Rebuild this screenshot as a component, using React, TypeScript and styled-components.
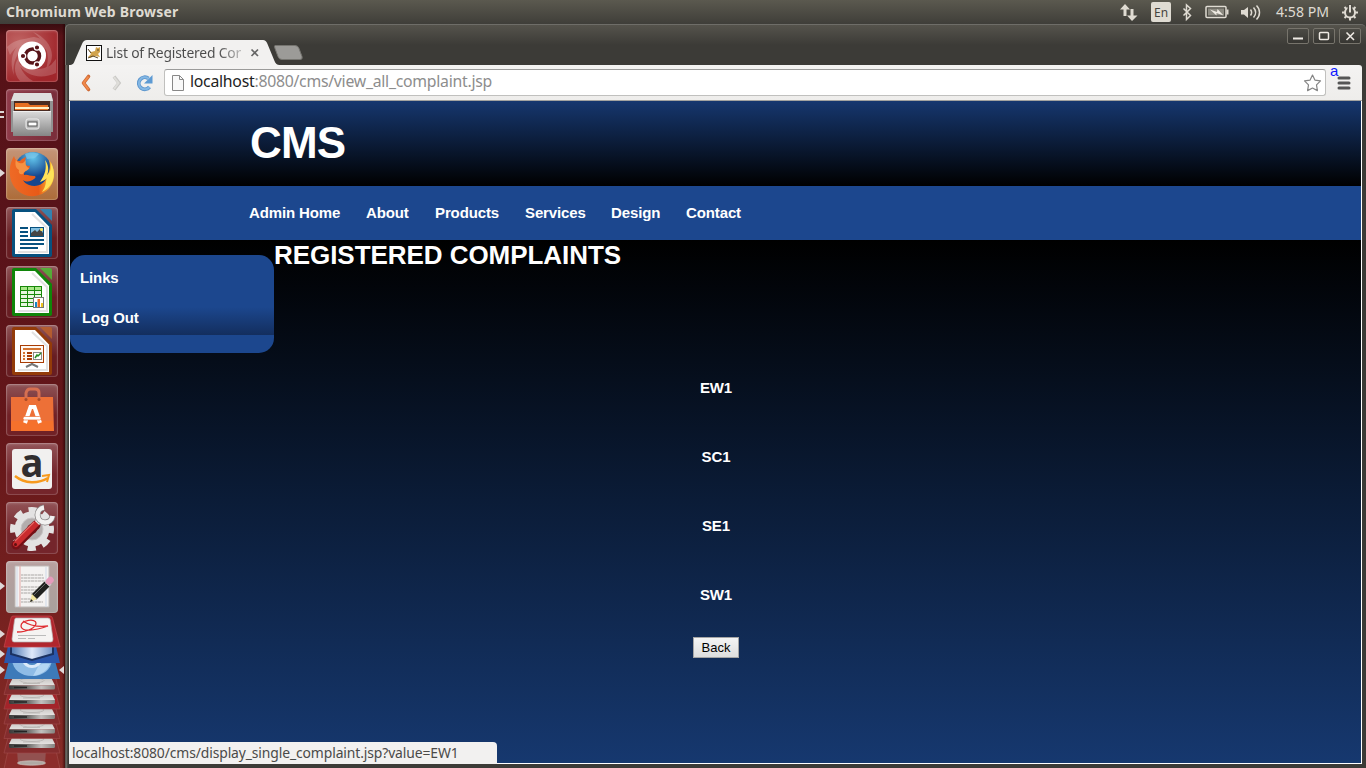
import React from "react";
import styled, { createGlobalStyle } from "styled-components";

const ui = `"Noto Sans", "Open Sans", sans-serif`;
const web = `"Liberation Sans", Arial, sans-serif`;

const Global = createGlobalStyle`
  * { box-sizing: border-box; }
  body { margin: 0; overflow: hidden; background: #3c3b37; }
  svg { display: block; flex: none; overflow: visible; }
`;

const Desktop = styled.div`
  width: 1366px;
  height: 768px;
  display: flex;
  flex-direction: column;
  overflow: hidden;
`;

const TopPanel = styled.header`
  height: 24px;
  flex: none;
  display: flex;
  align-items: center;
  justify-content: space-between;
  padding-left: 6px;
  background: linear-gradient(#5b594f, #3f3e39);
  color: #dfdbd2;
  font-family: ${ui};
`;

const PanelTitle = styled.span`
  font-size: 14px;
  font-weight: 700;
  line-height: 24px;
  white-space: nowrap;
  letter-spacing: 0.2px;
`;

const Workspace = styled.div`
  flex: 1;
  display: flex;
  min-height: 0;
`;

const Launcher = styled.nav`
  width: 65px;
  flex: none;
  display: flex;
  flex-direction: column;
  background: linear-gradient(90deg, rgba(0, 0, 0, 0) 62px, rgba(30, 0, 0, 0.6) 65px),
    linear-gradient(#3a0c10 0, #571217 12px, #58131a 200px, #641619 400px, #7c2522 650px, #852c27);
`;

const LauncherSlot = styled.div`
  height: 59px;
  flex: none;
  display: flex;
  padding-top: 6px;
  position: relative;
`;

const Tile = styled.div<{ $bg: string }>`
  width: 52px;
  height: 52px;
  margin-left: 6px;
  border-radius: 4px;
  background: ${(p) => p.$bg};
  box-shadow: inset 0 0 0 1px rgba(255, 255, 255, 0.14), inset 0 1px 3px rgba(255, 255, 255, 0.25);
`;

const Marker = styled.span<{ $top: number; $right?: boolean }>`
  position: absolute;
  top: ${(p) => p.$top}px;
  ${(p) => (p.$right ? "right: 1px;" : "left: 0;")}
  border: 4px solid transparent;
  ${(p) =>
    p.$right
      ? "border-right: 5px solid #ded8d8; border-left: 0;"
      : "border-left: 5px solid #ded8d8; border-right: 0;"}
`;

const DoubleMarker = styled.span`
  position: absolute;
  left: 0;
  top: 28px;
  width: 4px;
  height: 7px;
  border: solid #ded8d8;
  border-width: 2px 0;
`;

const Stack = styled.div`
  position: relative;
  flex: 1;
  overflow: hidden;
`;

const Window = styled.main`
  flex: 1;
  min-width: 0;
  display: flex;
  flex-direction: column;
  padding: 0 4px 4px;
  background: linear-gradient(90deg, #3c3b37 0, #77746d 1px, #3c3b37 3px, #3c3b37 100%);
  border-radius: 5px 5px 0 0;
`;

const TitleBar = styled.div`
  height: 41px;
  flex: none;
  margin: 0 -4px;
  padding: 0 5px 0 4px;
  display: flex;
  justify-content: space-between;
  border-top: 1px solid #6e6d68;
  border-left: 1px solid #77746d;
  border-radius: 5px 5px 0 0;
  background: linear-gradient(#55534c 0, #3c3b37 20px);
`;

const TabRow = styled.div`
  position: relative;
  width: 240px;
  height: 40px;
`;

const TabShape = styled.svg`
  position: absolute;
  left: -1px;
  bottom: 0;
`;

const TabContent = styled.div`
  position: absolute;
  left: 16px;
  top: 17px;
  height: 22px;
  display: flex;
  align-items: center;
  gap: 4px;
`;

const TabTitle = styled.span`
  width: 138px;
  white-space: nowrap;
  font: 13.9px/22px ${ui};
  letter-spacing: -0.2px;
  background: linear-gradient(90deg, #4b4b4b 112px, rgba(75, 75, 75, 0.25) 138px);
  background-clip: text;
  color: transparent;
`;

const WindowButtons = styled.div`
  display: flex;
  gap: 4px;
  padding-top: 3px;
`;

const WindowButton = styled.div`
  width: 22px;
  height: 16px;
  border: 1px solid #77746c;
  border-radius: 2px;
  background: linear-gradient(#4c4b45, #373632);
`;

const Toolbar = styled.div`
  height: 36px;
  flex: none;
  display: flex;
  align-items: center;
  background: linear-gradient(#f4f3f2, #eeedeb);
  border-bottom: 1px solid #a3a3a0;
  border-top-right-radius: 3px;
  padding: 0 10px 0 8px;
  position: relative;
`;

const AddressBar = styled.div`
  width: 1162px;
  height: 27px;
  margin-left: 10px;
  padding: 0 4px 0 6px;
  display: flex;
  align-items: center;
  background: #fff;
  border: 1px solid #c0c0be;
  border-top-color: #9b9b9a;
  border-radius: 3px;
`;

const Url = styled.span`
  margin-left: 5px;
  padding-bottom: 2px;
  flex: 1;
  font: 15.8px/23px ${ui};
  letter-spacing: -0.26px;
  color: #8d8d8d;
  b { font-weight: 400; color: #222; }
`;

const ExtensionLetter = styled.span`
  position: absolute;
  left: 1261px;
  top: -3px;
  font: 15px/18px ${web};
  color: #0b18ff;
`;

const Viewport = styled.section`
  flex: 1;
  min-height: 0;
  display: flex;
  flex-direction: column;
  position: relative;
  border: solid #fff;
  border-width: 0 1px 1px;
  font-family: ${web};
  font-weight: 700;
  color: #fff;
`;

const SiteHeader = styled.div`
  height: 85px;
  flex: none;
  padding: 17px 0 0 180px;
  font-size: 44px;
  letter-spacing: -0.8px;
  line-height: 50px;
  background: linear-gradient(#16376f, #000);
`;

const SiteNav = styled.div`
  height: 54px;
  flex: none;
  display: flex;
  gap: 25px;
  padding-left: 179px;
  font-size: 15px;
  letter-spacing: -0.12px;
  line-height: 54px;
  background: #1c478e;
`;

const NavLink = styled.span<{ $width: number }>`
  width: ${(p) => p.$width}px;
  white-space: nowrap;
`;

const Page = styled.div`
  flex: 1;
  min-height: 0;
  display: flex;
  background: linear-gradient(#000 0, #16386f 100%);
`;

const Sidebar = styled.aside`
  width: 204px;
  height: 98px;
  margin-top: 15px;
  border-radius: 15px;
  background: #1c478e;
  font-size: 15px;
  letter-spacing: -0.12px;
`;

const SidebarTitle = styled.div`
  height: 45px;
  padding-left: 10px;
  line-height: 46px;
`;

const SidebarLink = styled.div`
  height: 35px;
  padding-left: 12px;
  line-height: 35px;
  background: linear-gradient(#1c478e 20%, #132e5e);
`;

const Main = styled.div`
  flex: 1;
  display: flex;
  flex-direction: column;
`;

const Heading = styled.h1`
  margin: 0;
  font-size: 26px;
  letter-spacing: -0.05px;
  line-height: 30px;
`;

const Complaints = styled.div`
  width: 884px;
  margin-top: 83px;
  display: flex;
  flex-direction: column;
  align-items: center;
`;

const Complaint = styled.div`
  height: 69px;
  font-size: 15px;
  letter-spacing: -0.1px;
  line-height: 69px;
`;

const BackButton = styled.button`
  width: 46px;
  height: 21px;
  margin-top: 8px;
  padding: 0;
  border: 1px solid #a5a5a5;
  border-radius: 0;
  background: linear-gradient(#f4f4f4, #dedede);
  font: 13px/18px ${web};
  color: #000;
`;

const StatusBubble = styled.div`
  position: absolute;
  left: -1px;
  bottom: -1px;
  width: 428px;
  height: 22px;
  padding-left: 3px;
  background: #f2f1f0;
  border-top-right-radius: 4px;
  font: 13.9px/22px ${ui};
  letter-spacing: -0.11px;
  color: #4a4a48;
  white-space: nowrap;
`;

const MenuIcon = styled.svg`
  margin-left: 11px;
`;

function TrayIcons() {
  return (
    <svg width="248" height="24" viewBox="1118 0 248 24" fill="none" stroke="#dfdbd2" strokeWidth="2">
      <path d="M1125 16V8M1132 9v8" strokeWidth="3" />
      <path d="M1120 9.500l5-5.500 5 5.500zM1127 15.500l5 5.500 5.500-5.500z" fill="#dfdbd2" stroke="none" />
      <rect x="1151" y="2" width="20" height="20" rx="2" fill="#dfdbd2" stroke="none" />
      <text x="1154" y="17" fontFamily="Noto Sans" fontSize="13" textLength="14" lengthAdjust="spacingAndGlyphs" fill="#45433d" stroke="none">En</text>
      <path d="M1183.500 8.500l7 7-4 4V5l4 3.500-7 7" strokeWidth="1.500" />
      <rect x="1206" y="6.500" width="20" height="11" rx="1" strokeWidth="1.500" />
      <path d="M1227.500 9.500v5" />
      <rect x="1208" y="8.500" width="16" height="7" fill="#8c8a81" stroke="none" />
      <path d="M1210 9.500l7 2.500.5-3 6 6.500-7-2.500v2.500z" fill="#eeeae2" stroke="none" />
      <path d="M1241 10h3l4-3v11l-4-3.500h-3z" fill="#dfdbd2" stroke="none" />
      <path d="M1250.500 9.500c1.500 2 1.500 4 0 6M1253.500 7.500c2.600 3 2.600 7 0 10M1256.500 5.500c4 4 4 10 0 14" strokeWidth="1.500" />
      <text x="1276" y="17" fontFamily="Noto Sans" fontSize="13.500" textLength="53" lengthAdjust="spacingAndGlyphs" fill="#dfdbd2" stroke="none">4:58 PM</text>
      <circle cx="1350" cy="12.500" r="5" strokeWidth="2" />
      <path d="M1344.500 7l2 2m9-2-2 2m-9 9 2-2m9 2-2-2M1342 12.500h3m10 0h3M1350 17.500v3" />
      <path d="M1350 4v8" stroke="#4c4a43" strokeWidth="5" />
      <path d="M1350 5v7.500" />
    </svg>
  );
}

function UbuntuIcon() {
  return (
    <svg width="52" height="52" viewBox="0 0 52 52">
      <g fill="#fff" opacity=".18">
        <path d="M8 45C1 27 11 8 28 7c10 1 16 8 15 17-4-8-13-13-21-9C11 20 6 33 8 45z" />
        <path d="M27 2c16 6 26 24 13 37 4-13 2-25-13-37zM1 17c7-7 17-9 26-8-10 2-18 8-23 16z" />
        <path d="M50 43c-15 7-31 3-38-10 10 8 23 8 33 2l5-6zM14 51c-7-8-6-18-1-23 0 9 4 17 14 23z" />
      </g>
      <circle cx="26" cy="25.500" r="14" fill="#fff" />
      <circle cx="26.500" cy="26" r="7" fill="none" stroke="#571419" strokeWidth="3.500" />
      <g stroke="#fff" strokeWidth="1.200" fill="#571419">
        <circle cx="17" cy="26" r="2.700" /><circle cx="31" cy="17.500" r="2.700" /><circle cx="31" cy="34.500" r="2.700" />
      </g>
    </svg>
  );
}

function FilesIcon() {
  return (
    <svg width="52" height="52" viewBox="0 0 52 52">
      <defs><linearGradient id="cab" x2="0" y2="1"><stop stopColor="#dcdcdc" /><stop offset="1" stopColor="#858585" /></linearGradient></defs>
      <path d="M8 4h37l2 8v31H5V12z" fill="#929292" />
      <path d="M8 4h37l2 8H5z" fill="#dedede" />
      <path d="M8 12h36v12H8z" fill="#4a2b22" />
      <path d="M9 14h13l2 2h18v5H9z" fill="#e66f22" />
      <path d="M9 18h34v2H9z" fill="#fff1c7" />
      <path d="M7 22h38v25H7z" fill="url(#cab)" />
      <path d="M7 22.500h38" stroke="#efefef" />
      <rect x="20" y="30" width="13" height="10" rx="2" fill="#bbb" stroke="#eee" />
      <rect x="22" y="33" width="9" height="4" fill="#fff" stroke="#555" />
    </svg>
  );
}

function FirefoxIcon() {
  return (
    <svg width="52" height="52" viewBox="0 0 52 52">
      <defs>
        <radialGradient id="globe" cx=".5" cy=".15"><stop stopColor="#63c6ed" /><stop offset="1" stopColor="#15468e" /></radialGradient>
        <linearGradient id="fox" x2="1"><stop stopColor="#ee6a26" /><stop offset=".65" stopColor="#e85a17" /><stop offset="1" stopColor="#ffd13a" /></linearGradient>
      </defs>
      <circle cx="27" cy="23" r="19" fill="url(#globe)" />
      <path d="M19 6c4-2 10-2 14 0l-4 4-8 1z" fill="#7cc8ea" opacity=".7" />
      <path d="M8 8c-5 8-6 20-1 29 8 14 28 15 37 2 6-8 5-20-1-27 2 8 0 12-2 16-2 8-10 12-18 9-3-1-5-3-6-5 4 3 8 1 11-1 2-1 2-3 0-3-5 0-6-2-10-1 0-3 1-5 5-6l1-3c-3 0-5-1-6-2l2-7c-3 1-5 3-6 4-3 0-5-1-6-5z" fill="url(#fox)" />
      <path d="M39 12c5 7 3 13 2 15 5-4 4-9 4-12 6 12 2 24-9 29 5-7 3-10 5-14-3 3-5 3-7 4 5-7 7-14 5-22z" fill="#ffe258" />
      <path d="M10 11c1 4 4 5 7 4l3-3c-1 4 0 7 3 8-1 3-5 3-6 6-3 1-5-1-4-4-4-2-4-7-3-11z" fill="#f79243" />
    </svg>
  );
}

function DocumentIcon({ color, light, kind }: { color: string; light: string; kind: "text" | "sheet" | "slides" }) {
  return (
    <svg width="52" height="52" viewBox="0 0 52 52">
      <path d="M6 4q0-2 2-2h22l16 16v30q0 2-2 2H8q-2 0-2-2z" fill={color} />
      <path d="M34 2h10q2 0 2 2v10z" fill={light} opacity=".85" />
      <path d="M9 5h20l14 14.500V47H9z" fill="#fff" />
      <path d="M12 45h29V21L26 7" fill="none" stroke="#e2e2e2" strokeWidth="2" />
      {kind === "text" && (
        <g fill={color}>
          <path d="M14 20h8v2h-8zm0 4h8v2h-8zm0 4h8v2h-8zm0 4h24v2H14zm0 4h24v2H14zm0 4h18v2H14z" />
          <rect x="24" y="20" width="14" height="10" />
          <path d="M25 21h12v6H25z" fill="#82bfe0" />
          <path d="M25 29v-3l4-3 2 2 3-3 3 4v3z" fill="#444" /><circle cx="35.500" cy="22.500" r="1.500" fill="#ffe75e" />
        </g>
      )}
      {kind === "sheet" && (
        <g>
          <rect x="14" y="20" width="22" height="21" fill="#18880a" />
          <path fill="#a9e889" d="M15 21h6v3h-6zm7 0h6v3h-6zm7 0h6v3h-6z" />
          <path fill="#e7f6df" d="M15 25h6v3h-6zm7 0h6v3h-6zm7 0h6v3h-6zM15 29h6v3h-6zm7 0h6v3h-6zm7 0h6v3h-6zM15 33h6v3h-6zm7 0h6v3h-6zM15 37h6v3h-6zm7 0h6v3h-6z" />
          <rect x="27.500" y="31.500" width="10" height="10" fill="#fff" stroke="#777" />
          <path d="M29 36h2v5h-2z" fill="#1587c4" /><path d="M31.500 33h2.500v8h-2.500z" fill="#ef6b1c" /><path d="M35 37h2v4h-2z" fill="#edc21e" />
        </g>
      )}
      {kind === "slides" && (
        <g>
          <path d="M26 37v3m0-1-6 3m6-3 6 3" stroke="#777" strokeWidth="2" />
          <rect x="14.500" y="20.500" width="23" height="17" fill="#fff8f2" stroke="#a83c04" />
          <path d="M17 23h18v2H17zm0 4h2v2h-2zm0 3h2v2h-2zm0 3h2v2h-2z" fill="#d47330" />
          <path d="M21 27h5v2h-5zm0 3h5v2h-5zm0 3h5v2h-5z" fill="#a83c04" />
          <rect x="27.500" y="27.500" width="8" height="7" fill="#fff" stroke="#888" /><path d="M29 33l2-3 1 1 3-3" fill="none" stroke="#258d24" strokeWidth="1.500" />
        </g>
      )}
    </svg>
  );
}

function SoftwareIcon() {
  return (
    <svg width="52" height="52" viewBox="0 0 52 52">
      <path d="M5 13h42l1 34H5z" fill="#ed7037" /><path d="M5 37h42v10H5z" fill="#f5712c" />
      <path d="M20 16V9q1-4 4-4h5q4 0 4 4v7" fill="none" stroke="#d56f51" strokeWidth="3" />
      <circle cx="20" cy="15.500" r="1.500" fill="#a94b27" /><circle cx="33" cy="15.500" r="1.500" fill="#a94b27" />
      <path d="M19 39l5.500-16h4L34 39" fill="none" stroke="#fff" strokeWidth="4" />
      <rect x="17" y="32.500" width="18" height="3.500" rx="1.700" fill="#fff" stroke="#ed7037" strokeWidth=".7" />
    </svg>
  );
}

function AmazonIcon() {
  return (
    <svg width="52" height="52" viewBox="0 0 52 52">
      <rect x="6" y="6" width="40" height="40" rx="3" fill="#f1f0ef" />
      <text x="14.500" y="34" fontFamily="Open Sans" fontWeight="700" fontSize="39" textLength="23" lengthAdjust="spacingAndGlyphs" fill="#302e2f">a</text>
      <path d="M9 33c10 8 23 8 33 2" fill="none" stroke="#f79a1d" strokeWidth="2.500" />
      <path d="M36 33l7-1-2 7" fill="none" stroke="#f79a1d" strokeWidth="2" />
    </svg>
  );
}

function SettingsIcon() {
  return (
    <svg width="52" height="52" viewBox="0 0 52 52">
      <circle cx="26" cy="27" r="19" fill="none" stroke="#e3e2e2" strokeWidth="6" strokeDasharray="8.200 6.723" strokeDashoffset="4" />
      <circle cx="26" cy="27" r="17.500" fill="#e3e2e2" /><circle cx="26" cy="27" r="11" fill="#b3adad" stroke="#c9c6c6" /><circle cx="26" cy="27" r="5" fill="#64191d" />
      <path d="M10 43l20-20" stroke="#761016" strokeWidth="9" strokeLinecap="round" />
      <path d="M10 42l20-20" stroke="#c92b2e" strokeWidth="6" strokeLinecap="round" />
      <path d="M9 39l19-19" stroke="#e66a66" strokeWidth="1.300" />
      <path d="M31 21l5-5" stroke="#e9e8e8" strokeWidth="6" />
      <path d="M38 5.500a7.500 7.500 0 1 0 8.500 8.500" fill="none" stroke="#898686" strokeWidth="6" />
      <path d="M38 5.500a7.500 7.500 0 1 0 8.500 8.500" fill="none" stroke="#f2f1f0" strokeWidth="4.500" />
      <circle cx="9.500" cy="42.500" r="1.500" fill="#601010" />
    </svg>
  );
}

function EditorIcon() {
  return (
    <svg width="52" height="52" viewBox="0 0 52 52">
      <path d="M9 5h34v41H9z" fill="#f4f2f1" stroke="#bdb9b6" />
      <path d="M14 5v41" stroke="#e4a8a5" /><path d="M11 6v40M40 6v40" stroke="#cfdae9" />
      <path d="M15 14h22M15 17h23M15 20h24M15 26h20M15 29h22M15 32h18M15 38h15M15 41h22" stroke="#aaa7a5" strokeDasharray="2 .5 4 .5" />
      <path d="M28 36l13-13" stroke="#20211f" strokeWidth="7" /><path d="M28 34l12-12" stroke="#666" strokeWidth="1" />
      <path d="M24 41l2-8 5 5z" fill="#f2e59d" /><path d="M24 41l1-3 2 2z" fill="#222" />
      <path d="M41 23l2-2" stroke="#c9cccb" strokeWidth="7" /><path d="M43 20.500l1.500-1.500" stroke="#e69bbb" strokeWidth="6.500" strokeLinecap="round" />
    </svg>
  );
}

const disks = [674.5, 689, 704, 718.5, 733];

function LauncherStack() {
  return (
    <svg width="65" height="155" viewBox="0 613 65 155">
      <defs>
        <linearGradient id="disk" x2="0" y2="1"><stop stopColor="#bcbab8" /><stop offset="1" stopColor="#e4e2e0" /></linearGradient>
        <linearGradient id="front" x2="1"><stop stopColor="#3b3b3a" /><stop offset=".4" stopColor="#6b6a68" /><stop offset=".7" stopColor="#c2c0be" /><stop offset="1" stopColor="#858380" /></linearGradient>
        <linearGradient id="cube" x2="1"><stop stopColor="#4d78b4" /><stop offset=".5" stopColor="#dfe9fa" /><stop offset="1" stopColor="#6c8fc4" /></linearGradient>
      </defs>
      <path d="M10 740h44l6 28H4z" fill="#8c2d2b" stroke="#a14c49" strokeWidth=".7" />
      <path d="M17 749h29l-1 14H18z" fill="#925150" /><ellipse cx="31.500" cy="762" rx="14" ry="2.200" fill="#b0aaa4" stroke="#d0c6c2" strokeWidth=".7" />
      {[...disks].reverse().map((y) => (
        <g key={y}>
          <path d={`M9 ${y}h46l5 19H4z`} fill={y === 689 ? "#a3242a" : "#842c2d"} stroke="#a34b4b" strokeWidth=".6" />
          <path d={`M14 ${y}h36l5 10H9z`} fill="url(#disk)" />
          <ellipse cx="32" cy={y + 5} rx="12" ry="2.500" fill="none" stroke="#b1afac" strokeWidth=".7" />
          <path d={`M23 ${y + 8}h17`} stroke="#b1afac" strokeWidth=".7" />
          <path d={`M9 ${y + 10}h46v2.500q0 1.500-1.500 1.500h-43Q9 ${y + 14} 9 ${y + 12.5}z`} fill="url(#front)" />
          <path d={`M14 ${y + 12}h13`} stroke="#242424" strokeWidth="1.500" />
        </g>
      ))}
      <path d="M10 656h44l6 22H4z" fill="#3d7ab9" />
      <path d="M12 659c1 10 9 16 20 16s19-6 20-16z" fill="#8fbce6" />
      <path d="M33 675l6-11q5-2 11-1-4 10-17 12z" fill="#b4d6f3" />
      <path d="M22 659q2 8 10 8t10-8z" fill="#dbeafa" /><path d="M25 659q2 5 7 5t7-5z" fill="#4c87c3" />
      <path d="M9 641h46l5 21H4z" fill="#2a57ad" />
      <path d="M11 645h42v8l-21 6-21-6z" fill="url(#cube)" stroke="#1b3262" strokeWidth="2" />
      <path d="M13 615h37q2 0 2.500 2l7.500 29H4l7-29q.5-2 2-2z" fill="#b0262d" stroke="#c5494d" strokeWidth=".7" />
      <path d="M16 617h32q2 0 2.300 2l2.700 19q0 3-2 3H14q-2 0-2-3l2.500-19q.3-2 1.500-2z" fill="#f5f3f2" stroke="#b6b2b1" strokeWidth=".7" />
      <path d="M17 631c12 0 19-5 19-9 0-5-15-3-15 3 0 6 13 5 27 0-9 1-18 0-25-5" fill="none" stroke="#df2c31" strokeWidth="1.300" />
      <path d="M18 634.500h28M18 637.500h8m2 0h7" stroke="#bbb" />
    </svg>
  );
}

const launchers = [
  { bg: "radial-gradient(circle at 25% 25%,#c06463,#a0262b 75%)", icon: <UbuntuIcon /> },
  { bg: "linear-gradient(90deg,#8f3a49,#792d3a)", icon: <FilesIcon />, marker: "double" },
  { bg: "linear-gradient(#c59578,#ad6c39)", icon: <FirefoxIcon />, marker: "single" },
  { bg: "linear-gradient(#8e5356,#671d22 60%)", icon: <DocumentIcon kind="text" color="#07517f" light="#278cc0" /> },
  { bg: "linear-gradient(#8e5356,#671d22 60%)", icon: <DocumentIcon kind="sheet" color="#108509" light="#4ebc35" /> },
  { bg: "linear-gradient(#8e5356,#671d22 60%)", icon: <DocumentIcon kind="slides" color="#933b09" light="#bc602c" /> },
  { bg: "linear-gradient(#8e5356,#702126 60%)", icon: <SoftwareIcon /> },
  { bg: "linear-gradient(#925357,#74252b 60%)", icon: <AmazonIcon /> },
  { bg: "linear-gradient(#925357,#74252b 60%)", icon: <SettingsIcon /> },
  { bg: "linear-gradient(#b8a09f,#a8a09c)", icon: <EditorIcon />, marker: "single" },
];

const links: [string, number][] = [["Admin Home", 92], ["About", 44], ["Products", 65], ["Services", 61], ["Design", 50], ["Contact", 56]];

export default function App() {
  return (
    <Desktop>
      <Global />
      <TopPanel>
        <PanelTitle>Chromium Web Browser</PanelTitle>
        <TrayIcons />
      </TopPanel>
      <Workspace>
        <Launcher>
          {launchers.map((item, i) => (
            <LauncherSlot key={i}>
              <Tile $bg={item.bg}>{item.icon}</Tile>
              {item.marker === "single" && <Marker $top={27} />}
              {item.marker === "double" && <DoubleMarker />}
            </LauncherSlot>
          ))}
          <Stack>
            <LauncherStack />
            <Marker $top={16} /><Marker $top={36} /><Marker $top={52} /><Marker $top={52} $right />
          </Stack>
        </Launcher>
        <Window>
          <TitleBar>
            <TabRow>
              <TabShape width="240" height="25" viewBox="0 0 240 25">
                <path d="M0 25c4 0 5-2 6-5l7-16q1.500-4 5-4h176q3 0 4.500 4l7 17q1.500 4 5 4z" fill="#f2f1f0" />
                <path d="M206 5.500h20q3 0 4 3l3 8q1 3-2 3h-18q-3 0-4-3l-3-8q-1-3 0-3z" fill="#9c9b98" stroke="#75746f" />
              </TabShape>
              <TabContent>
                <svg width="16" height="16" viewBox="0 0 16 16">
                  <rect x=".5" y=".5" width="15" height="15" fill="#fff" stroke="#111" />
                  <path d="M2 4l3 3 4-1 1-4 2 1 2-1v5l-2 2 2 3-5-1-5 2-2-1 3-3z" fill="#d1a34d" /><path d="M2 4l3 4M2 13l5-2 5 2M11 5h2" stroke="#59482d" fill="none" />
                </svg>
                <TabTitle>List of Registered Cor</TabTitle>
                <svg width="14" height="14" viewBox="0 0 14 14" stroke="#666" strokeWidth="1.700"><path d="M3.500 3.500l6.500 6.500M10 3.500l-6.500 6.500" /></svg>
              </TabContent>
            </TabRow>
            <WindowButtons>
              <WindowButton><svg width="20" height="14"><path d="M5 9.500h10" stroke="#eeeae4" strokeWidth="2" /></svg></WindowButton>
              <WindowButton><svg width="20" height="14"><rect x="5.500" y="3.500" width="9" height="7" rx="1" fill="none" stroke="#eeeae4" strokeWidth="1.500" /></svg></WindowButton>
              <WindowButton><svg width="20" height="14"><path d="M6.500 3.500l7.500 7.500m0-7.500l-7.500 7.500" stroke="#eeeae4" strokeWidth="1.600" /></svg></WindowButton>
            </WindowButtons>
          </TitleBar>
          <Toolbar>
            <svg width="77" height="24" viewBox="77 70.500 77 24" fill="none">
              <path d="M88.500 76l-5 6.500 5 6.500" stroke="#cf6a35" strokeWidth="3.600" strokeLinejoin="round" strokeLinecap="round" />
              <path d="M88.500 76l-5 6.500 5 6.500" stroke="#f18a4b" strokeWidth="2" />
              <path d="M114 76l5 6.500-5 6.500" stroke="#c9c8c5" strokeWidth="3.500" /><path d="M114 76.500l4.500 6-4.500 6" stroke="#dfdeda" strokeWidth="2" />
              <path d="M149.500 86.500a6 6 0 1 1-1-8.500" stroke="#5a94cc" strokeWidth="3.800" /><path d="M152.500 74.500v8.500H144z" fill="#5d9ad3" />
              <path d="M149.500 86.500a6 6 0 1 1-1-8.500" stroke="#83b7e4" strokeWidth="2" />
            </svg>
            <AddressBar>
              <svg width="14" height="18" viewBox="0 0 14 18"><path d="M1.500 1.500h7l4 4v11h-11z" fill="#f9f9f9" stroke="#888" /><path d="M8.500 1.500v4h4" fill="none" stroke="#888" /></svg>
              <Url><b>localhost</b>:8080/cms/view_all_complaint.jsp</Url>
              <svg width="18" height="18" viewBox="-.5 0 18 18"><path d="M9 1l2.400 5.100 5.600.8-4 4 .9 5.700L9 14l-4.900 2.600.9-5.700-4-4 5.600-.8z" fill="#fff" stroke="#858585" strokeWidth="1.200" strokeLinejoin="round" /></svg>
            </AddressBar>
            <ExtensionLetter>a</ExtensionLetter>
            <MenuIcon width="14" height="14" viewBox="0 0 14 14" stroke="#555" strokeWidth="3" strokeLinecap="round"><path d="M2 2h10M2 7h10M2 12h10" /></MenuIcon>
          </Toolbar>
          <Viewport>
            <SiteHeader>CMS</SiteHeader>
            <SiteNav>{links.map(([name, width]) => <NavLink key={name} $width={width}>{name}</NavLink>)}</SiteNav>
            <Page>
              <Sidebar><SidebarTitle>Links</SidebarTitle><SidebarLink>Log Out</SidebarLink></Sidebar>
              <Main>
                <Heading>REGISTERED COMPLAINTS</Heading>
                <Complaints>
                  {["EW1", "SC1", "SE1", "SW1"].map((name) => <Complaint key={name}>{name}</Complaint>)}
                  <BackButton>Back</BackButton>
                </Complaints>
              </Main>
            </Page>
            <StatusBubble>localhost:8080/cms/display_single_complaint.jsp?value=EW1</StatusBubble>
          </Viewport>
        </Window>
      </Workspace>
    </Desktop>
  );
}
